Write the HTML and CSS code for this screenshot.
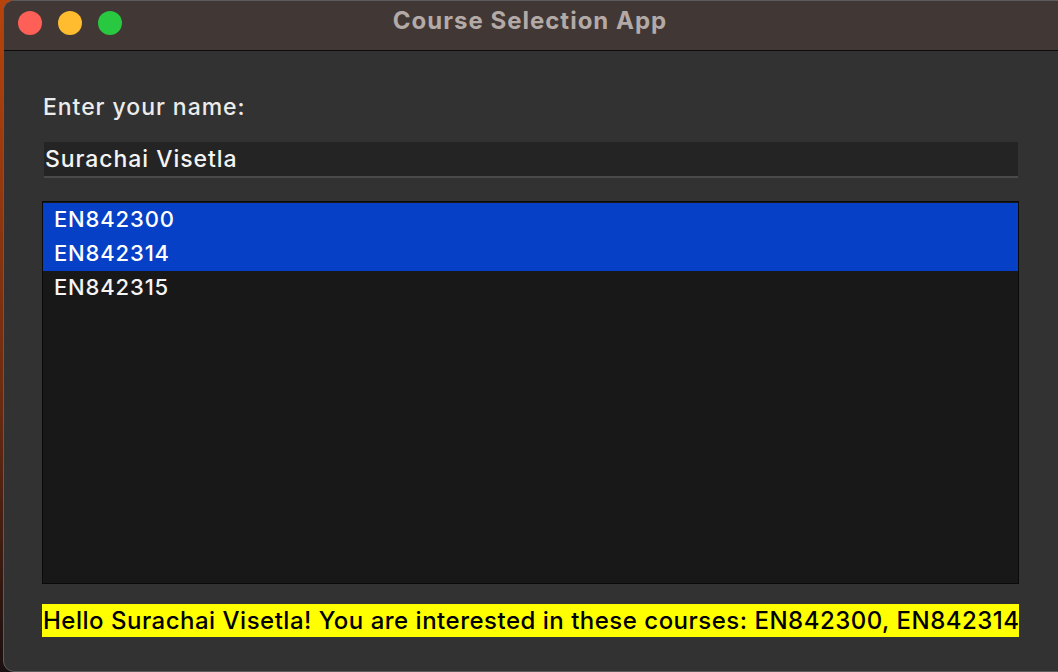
FILE: index.html
```html
<!DOCTYPE html>
<html>
<head>
<meta charset="utf-8">
<link rel="stylesheet" href="styles.css">
</head>
<body>
<div class="desk">
  <div class="window">
    <div class="titlebar">
      <div class="lights">
        <span class="light red"></span>
        <span class="light yellow"></span>
        <span class="light green"></span>
      </div>
      <div class="title">Course Selection App</div>
    </div>
    <div class="content">
      <div class="label">Enter your name:</div>
      <div class="entry">Surachai Visetla</div>
      <div class="listbox">
        <div class="item selected">EN842300</div>
        <div class="item selected">EN842314</div>
        <div class="item">EN842315</div>
      </div>
      <div class="result">Hello Surachai Visetla! You are interested in these courses: EN842300, EN842314</div>
    </div>
  </div>
</div>
</body>
</html>
```
FILE: styles.css
```css
html, body {
  margin: 0;
  padding: 0;
  width: 1058px;
  height: 672px;
  overflow: hidden;
}
body {
  background: linear-gradient(#b8440c 0%, #6a2a10 60%, #1a1010 100%);
  font-family: Inter, "Noto Sans", sans-serif;
}
.desk {
  padding-left: 3px;
  height: 672px;
  box-sizing: border-box;
}
.window {
  width: 1066px;
  height: 672px;
  background: #323232;
  border: 1px solid #5c5c5c;
  border-radius: 11px;
  box-sizing: border-box;
  overflow: hidden;
  display: flex;
  flex-direction: column;
}
.titlebar {
  height: 50px;
  flex: none;
  background: #413734;
  border-bottom: 1px solid #0c0c0c;
  box-sizing: border-box;
  display: flex;
  align-items: center;
  position: relative;
}
.lights {
  display: flex;
  gap: 16px;
  padding-left: 14px;
  margin-top: -6px;
}
.light {
  width: 24px;
  height: 24px;
  border-radius: 50%;
  display: block;
}
.red { background: #fe5f57; }
.yellow { background: #febc2e; }
.green { background: #28c840; }
.title {
  position: absolute;
  left: 0;
  width: 1052px;
  top: 5px;
  text-align: center;
  color: #b3aaa7;
  font-weight: 700;
  font-size: 24px;
  letter-spacing: 1px;
}
.content {
  padding: 40px 0 0 38px;
  display: flex;
  flex-direction: column;
}
.label {
  color: #ececec;
  font-size: 23px;
  font-weight: 450;
  letter-spacing: 0.95px;
  line-height: 32px;
  height: 32px;
  padding-left: 1px;
}
.entry {
  margin-top: 19px;
  margin-left: 2px;
  width: 974px;
  height: 36px;
  box-sizing: border-box;
  background: #242424;
  border-bottom: 2px solid #4a4a4a;
  color: #f4f4f4;
  font-size: 23px;
  font-weight: 450;
  letter-spacing: 0.95px;
  line-height: 34px;
  padding-left: 1px;
}
.listbox {
  margin-top: 23px;
  width: 977px;
  height: 383px;
  box-sizing: border-box;
  background: #181818;
  border: 1px solid #0a0a0a;
  padding-top: 1px;
}
.item {
  height: 34px;
  line-height: 32px;
  padding-left: 11px;
  color: #f4f4f4;
  font-size: 22px;
  font-weight: 450;
  letter-spacing: 0.85px;
}
.item.selected {
  background: #0540c6;
  color: #ffffff;
}
.result {
  margin-top: 20px;
  width: 977px;
  height: 33px;
  line-height: 33px;
  background: #ffff00;
  color: #000000;
  font-size: 24px;
  font-weight: 450;
  letter-spacing: 0.5px;
  padding-left: 1px;
  box-sizing: border-box;
  white-space: nowrap;
}
```
